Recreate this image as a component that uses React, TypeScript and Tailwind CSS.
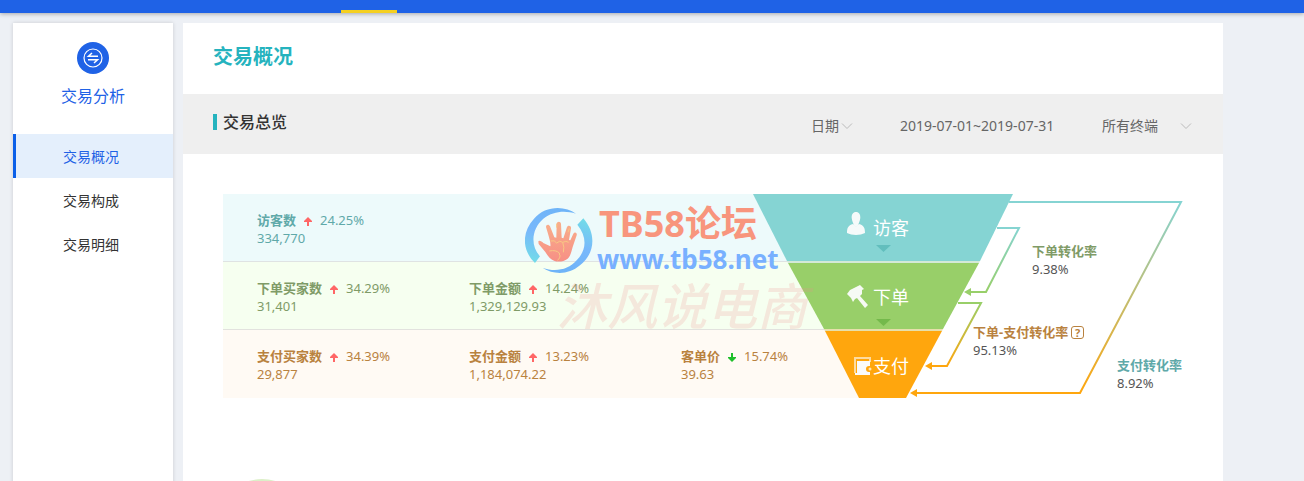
type Metric = {
  label: string;
  change: string;
  value: string;
  down?: boolean;
};

const menu = ["交易概况", "交易构成", "交易明细"];

const rows: { className: string; metrics: Metric[] }[] = [
  {
    className: "bg-[#edfafb] text-[#5fa9a9] border-b border-[#dfe3e3]",
    metrics: [{ label: "访客数", change: "24.25%", value: "334,770" }],
  },
  {
    className: "bg-[#f6fff0] text-[#7f9b67] border-b border-[#e2e2de]",
    metrics: [
      { label: "下单买家数", change: "34.29%", value: "31,401" },
      { label: "下单金额", change: "14.24%", value: "1,329,129.93" },
    ],
  },
  {
    className: "bg-[#fffaf4] text-[#b9823f]",
    metrics: [
      { label: "支付买家数", change: "34.39%", value: "29,877" },
      { label: "支付金额", change: "13.23%", value: "1,184,074.22" },
      { label: "客单价", change: "15.74%", value: "39.63", down: true },
    ],
  },
];

const Chevron = ({ className }: { className: string }) => (
  <svg viewBox="0 0 12 8" className={`pointer-events-none absolute h-2 w-3 ${className}`} fill="none" stroke="#bbb">
    <path d="M1 1.500L6 6.500L11 1.500" />
  </svg>
);

const Trend = ({ down }: { down?: boolean }) => (
  <svg viewBox="0 0 8 9" className={`mx-2 mt-0.5 h-[9px] w-2 ${down ? "rotate-180" : ""}`} fill={down ? "#1fbf2b" : "#ff6666"}>
    <path d="M4 0L8 4V5H5V9H3V5H0V4Z" />
  </svg>
);

const Sidebar = () => (
  <aside className="w-40 shrink-0 bg-white shadow-[0_0_4px_rgba(0,0,0,0.15)]">
    <div className="flex h-[111px] flex-col items-center pt-[19px] text-[#1f62e6]">
      <svg viewBox="0 0 32 32" className="h-8 w-8" fill="none" stroke="#fff">
        <circle cx="16" cy="16" r="16" fill="#1f62e6" stroke="none" />
        <circle cx="16" cy="16" r="9" strokeWidth="1.200" />
        <path d="M21 14.200H11.500L15 11M11 17.800H20.500L17 21" strokeWidth="1.500" />
      </svg>
      <h2 className="mt-2.5 text-base leading-6">交易分析</h2>
    </div>
    <nav className="text-sm">
      {menu.map((item, i) => (
        <a
          key={item}
          href="#"
          className={`flex h-11 items-center justify-center border-l-3 pt-0.5 pr-[7px] ${
            i === 0
              ? "border-[#0b5fe8] bg-[#e4effc] text-[#1f62e6]"
              : "border-transparent text-[#333]"
          }`}
        >
          {item}
        </a>
      ))}
    </nav>
  </aside>
);

const Filters = () => (
  <div className="flex items-center pt-1 text-sm leading-5 text-[#666]">
    <label className="relative flex items-center">
      <select aria-label="日期" className="w-[46px] appearance-none bg-transparent outline-none">
        <option>日期</option>
      </select>
      <Chevron className="right-1" />
    </label>
    <button type="button" className="ml-[43px] w-[158px] text-left whitespace-nowrap">
      2019-07-01~2019-07-31
    </button>
    <label className="relative ml-11 flex items-center">
      <select aria-label="终端" className="w-[90px] appearance-none bg-transparent outline-none">
        <option>所有终端</option>
      </select>
      <Chevron className="right-0" />
    </label>
  </div>
);

const MetricItem = ({ metric }: { metric: Metric }) => (
  <div className="w-[212px] shrink-0">
    <div className="flex items-center">
      <span className="font-bold">{metric.label}</span>
      <Trend down={metric.down} />
      <span>{metric.change}</span>
    </div>
    <div>{metric.value}</div>
  </div>
);

const Funnel = () => (
  <svg viewBox="0 0 430 204" className="h-[204px] w-[430px]">
    <defs>
      <linearGradient id="visitToOrder" gradientUnits="userSpaceOnUse" x1="0" y1="33" x2="0" y2="98">
        <stop offset="0" stopColor="#85d4d3" />
        <stop offset="1" stopColor="#98cf69" />
      </linearGradient>
      <linearGradient id="orderToPay" gradientUnits="userSpaceOnUse" x1="0" y1="109" x2="0" y2="172">
        <stop offset="0" stopColor="#98cf69" />
        <stop offset="1" stopColor="#ffa60d" />
      </linearGradient>
      <linearGradient id="visitToPay" gradientUnits="userSpaceOnUse" x1="0" y1="8" x2="0" y2="199">
        <stop offset="0" stopColor="#85d4d3" />
        <stop offset="1" stopColor="#ffa60d" />
      </linearGradient>
    </defs>

    <path d="M0 0H260L227 67H34Z" fill="#85d4d3" />
    <path d="M34 67H227L226 69H35Z" fill="#d3e9d8" />
    <path d="M35 69H226L190 135H71Z" fill="#98cf69" />
    <path d="M71 135H190L189 137H72Z" fill="#e6dfab" />
    <path d="M72 137H189L153 204H106Z" fill="#ffa60d" />

    <g fill="none" strokeWidth="2">
      <path d="M244 34H266L233 98H216" stroke="url(#visitToOrder)" />
      <path d="M205 109H228L194 172H179" stroke="url(#orderToPay)" />
      <path d="M256 8H428L327 199H164" stroke="url(#visitToPay)" />
    </g>
    <path d="M211 98L218 94V102Z" fill="#98cf69" />
    <path d="M172 172L179 168V176Z" fill="#ffa60d" />
    <path d="M157 199L164 195V203Z" fill="#ffa60d" />

    <path d="M123 51H138L130.500 58Z" fill="#62bebd" />
    <path d="M123 125H138L130.500 132Z" fill="#74b94b" />

    {/* visitor */}
    <g fill="#f6fafa">
      <path d="M103 18C106 18 107.500 20.500 107.300 24C107 27.500 105.500 29.500 105 31.500L103 33L101 31.500C100.500 29.500 99 27.500 98.700 24C98.500 20.500 100 18 103 18Z" />
      <path d="M94 39C94 34 95 31.500 100 30L103 32.500L106 30C111 31.500 112 34 112 39C107 41.500 99 41.500 94 39Z" />
    </g>
    {/* gavel */}
    <path d="M94 100L97 96L107 91L111 95L109 96L109 100L107 102L115 111L112 114L104 104L102 105L100 108L98 104Z" fill="#f6faf4" />
    {/* wallet */}
    <path d="M102 179V164H117V168" fill="none" stroke="#fddba0" strokeWidth="2" />
    <path d="M104 167H117V172H116A3 3 0 0 0 116 178H117V181H102V179H104Z" fill="#fafafa" />
    <circle cx="117" cy="175" r="1.500" fill="#fde3b4" />

    <g fill="#fff" fontSize="18">
      <text x="120" y="41">访客</text>
      <text x="120" y="110">下单</text>
      <text x="120" y="179">支付</text>
    </g>
  </svg>
);

const Watermark = () => (
  <div className="pointer-events-none absolute top-[13px] left-[302px]">
    <div className="flex">
      <svg viewBox="75 50 204 201" className="h-[67px] w-[68px] shrink-0">
        <defs>
          <linearGradient id="ringLeft" x1="0.500" y1="0" x2="0.200" y2="1">
            <stop offset="0" stopColor="#6fb4f8" />
            <stop offset="0.500" stopColor="#78b8fb" />
            <stop offset="1" stopColor="#72dce8" />
          </linearGradient>
          <linearGradient id="ringRight" x1="0.800" y1="0" x2="0.500" y2="1">
            <stop offset="0" stopColor="#72dce8" />
            <stop offset="0.500" stopColor="#78b8fb" />
            <stop offset="1" stopColor="#6fb4f8" />
          </linearGradient>
          <linearGradient id="palm" gradientUnits="userSpaceOnUse" x1="0" y1="90" x2="0" y2="215">
            <stop offset="0" stopColor="#f8b08c" />
            <stop offset="1" stopColor="#f78f85" />
          </linearGradient>
        </defs>
        <path d="M228 70C195 45 135 45 102 85C65 125 65 180 105 218L120 198C90 165 95 115 130 85C160 62 195 60 228 70Z" fill="url(#ringLeft)" />
        <path d="M250 84C290 130 285 190 240 225C205 255 160 253 128 233C165 245 205 240 230 210C260 180 262 140 232 103Z" fill="url(#ringRight)" />
        <path
          d="M115 153C118 149 125 153 130 158L151 168C153 160 148 144 144 130L138 110C138 102 147 101 150 108L163 141L169 142L170 100C171 92 182 92 183 100L185 142L190 144L201 110C205 103 214 106 213 114L207 149L211 150L220 130C225 123 232 128 230 135L218 170C214 184 212 197 202 206C192 214 173 216 162 211C150 206 143 197 136 185L116 161Z"
          fill="url(#palm)"
        />
        <path
          d="M152 152Q164 148 170 158Q180 148 188 156Q198 150 206 156M148 182Q168 178 178 188Q184 202 172 210M188 156Q194 170 190 186M170 100V112M208 114L204 126"
          fill="none"
          stroke="#f8c884"
          strokeWidth="3"
        />
      </svg>
      <div className="ml-1 font-bold whitespace-nowrap">
        <div className="ml-0.5 h-[35px] text-4xl leading-[34px] text-[#f8957d]">TB58论坛</div>
        <div className="text-[26px] leading-[34px] text-[#78b0ff]">www.tb58.net</div>
      </div>
    </div>
    <div className="ml-8 text-[50px] leading-[60px] font-medium whitespace-nowrap text-[#f28c8c]/20 italic">沐风说电商</div>
  </div>
);

export default function App() {
  return (
    <div className="h-screen overflow-hidden bg-[#edf0f5] font-['Noto_Sans','Noto_Sans_CJK_SC',sans-serif]">
      <header className="flex h-[13px] items-end bg-[#1f62e6] pl-[341px] shadow-[0_1px_4px_rgba(0,0,0,0.3)]">
        <div className="h-[3px] w-14 bg-[#f5d021]" />
      </header>

      <div className="mt-2.5 flex h-full max-w-[1223px] gap-2.5 pl-[13px]">
        <Sidebar />

        <main className="min-w-0 flex-1 bg-white">
          <h1 className="flex h-[71px] items-center px-[30px] pb-1 text-xl font-bold text-[#25b3be]">
            交易概况
          </h1>
          <section>
            <div className="flex h-[60px] items-center justify-between bg-[#efefef] pr-[31px] pl-[30px]">
              <h2 className="flex items-center gap-1.5 pb-1 text-base leading-6 font-medium text-[#333]">
                <span className="h-4 w-1 bg-[#25b3be]" />
                交易总览
              </h2>
              <Filters />
            </div>

            <div className="relative mx-10 mt-10 flex text-[13px] leading-[18px]">
              <div className="w-[636px] shrink-0">
                {rows.map((row) => (
                  <div key={row.metrics[0].label} className={`flex h-[68px] pt-[17px] pl-[34px] ${row.className}`}>
                    {row.metrics.map((metric) => (
                      <MetricItem key={metric.label} metric={metric} />
                    ))}
                  </div>
                ))}
              </div>

              <div className="relative -ml-[106px] shrink-0">
                <Funnel />
                <div className="absolute top-12 left-[279px] whitespace-nowrap text-[#555]">
                  <div className="font-bold text-[#7f9b67]">下单转化率</div>
                  <div>9.38%</div>
                </div>
                <div className="absolute top-[129px] left-[220px] whitespace-nowrap text-[#555]">
                  <div className="flex items-center gap-[3px] font-bold text-[#b9823f]">
                    下单-支付转化率
                    <button
                      type="button"
                      aria-label="说明"
                      className="flex h-[13px] w-[13px] items-center justify-center rounded-[3px] border border-[#b9823f] text-[11px] leading-none"
                    >
                      ?
                    </button>
                  </div>
                  <div>95.13%</div>
                </div>
                <div className="absolute top-[162px] left-[364px] whitespace-nowrap text-[#555]">
                  <div className="font-bold text-[#5fa9a9]">支付转化率</div>
                  <div>8.92%</div>
                </div>
              </div>

              <Watermark />
            </div>
          </section>

          <section className="px-[34px] pt-[81px]">
            <div className="h-[90px] w-[90px] rounded-full bg-[#dcefc8]" />
          </section>
        </main>
      </div>
    </div>
  );
}
